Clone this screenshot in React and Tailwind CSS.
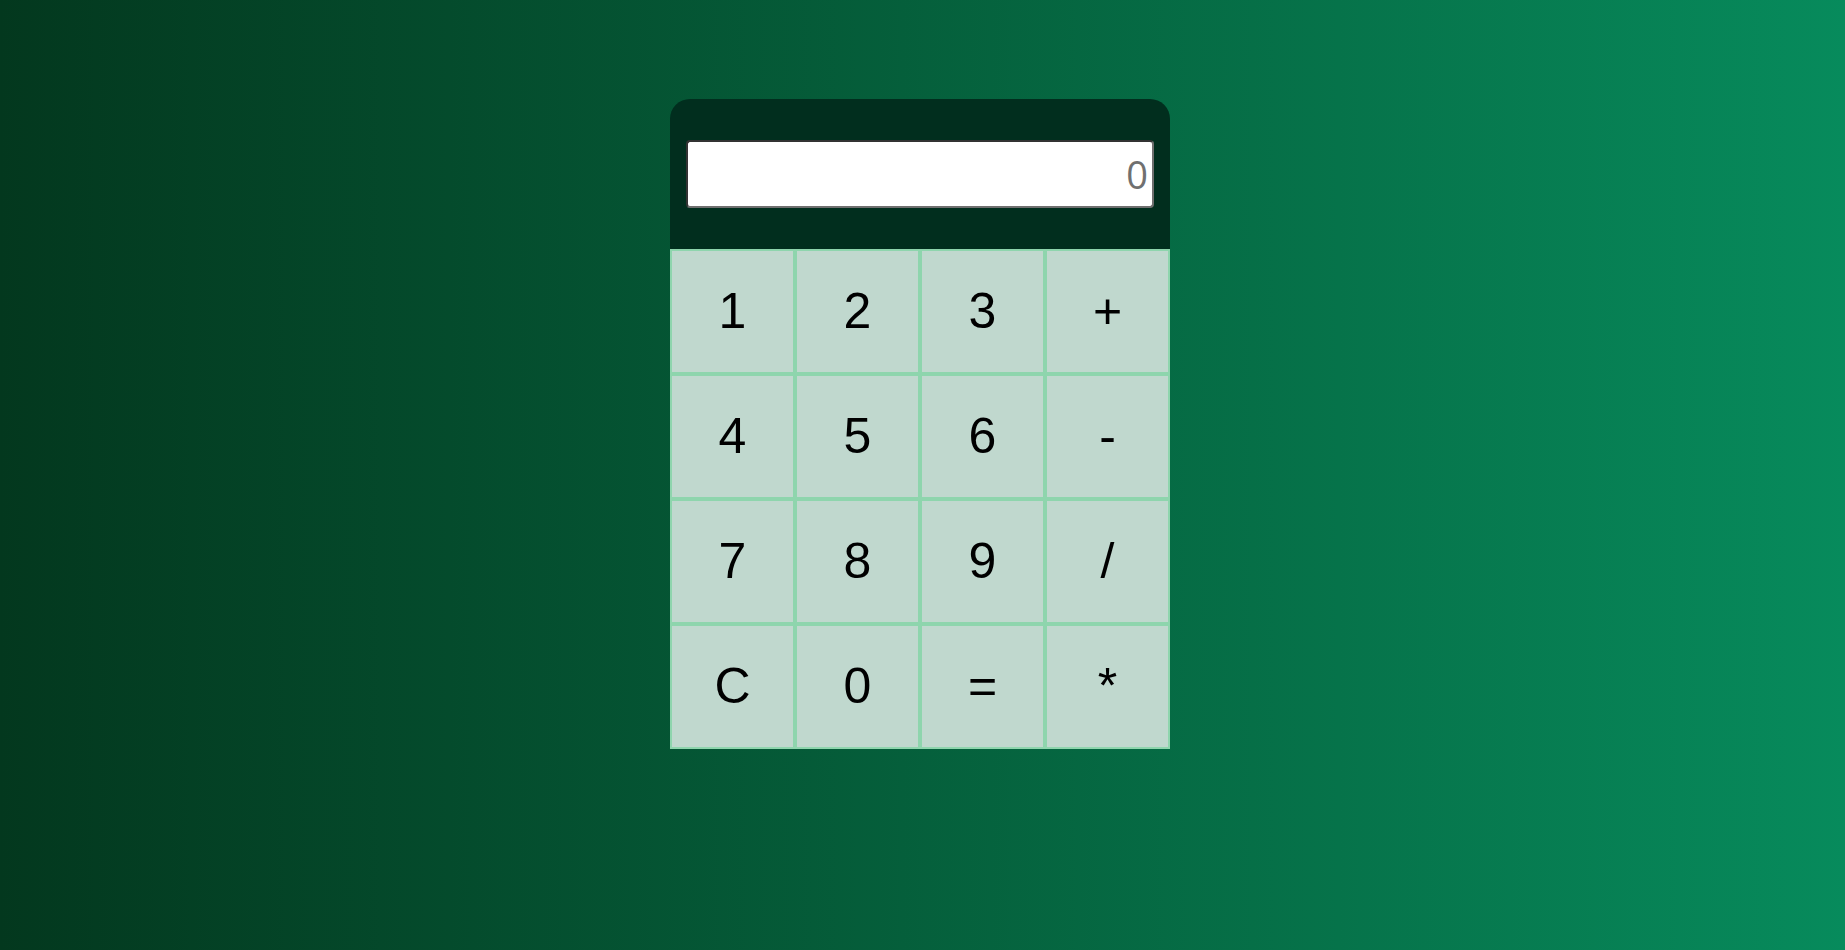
import React, { useState } from 'react';

const keys = ['1', '2', '3', '+', '4', '5', '6', '-', '7', '8', '9', '/', 'C', '0', '=', '*'];

export default function App() {
  const [value, setValue] = useState('');

  const handleKey = (k) => {
    if (k === 'C') return setValue('');
    if (k === '=') {
      try {
        // eslint-disable-next-line no-new-func
        setValue(String(Function(`return (${value || 0})`)()));
      } catch {
        setValue('Error');
      }
      return;
    }
    setValue(value + k);
  };

  return (
    <div
      className="min-h-screen w-full bg-gradient-to-r from-[#03381e] to-[#078b5c] flex justify-center pt-[99px]"
      style={{ fontFamily: '"Liberation Sans", Arial, sans-serif' }}
    >
      <div className="w-[500px] h-fit mr-[5px]">
        {/* Display */}
        <div className="bg-[#012e1e] rounded-t-[20px] pt-[41px] pb-[41px] pl-[16px] pr-[16px]">
          <input
            type="text"
            readOnly
            value={value}
            placeholder="0"
            className="w-full h-[68px] bg-white rounded-[4px] border-2 border-[#6f6f6f] border-t-[#333] border-l-[#333] text-right pr-[4px] text-[38px] text-black placeholder:text-[#707070] outline-none"
            style={{ fontFamily: '"Open Sans", "Noto Sans", sans-serif' }}
          />
        </div>

        {/* Keypad */}
        <div className="grid grid-cols-4">
          {keys.map((k) => (
            <button
              key={k}
              onClick={() => handleKey(k)}
              className="h-[125px] bg-[#c0d8ce] border-2 border-[#8ed5ad] text-black text-[50px] flex items-center justify-center"
            >
              {k}
            </button>
          ))}
        </div>
      </div>
    </div>
  );
}
